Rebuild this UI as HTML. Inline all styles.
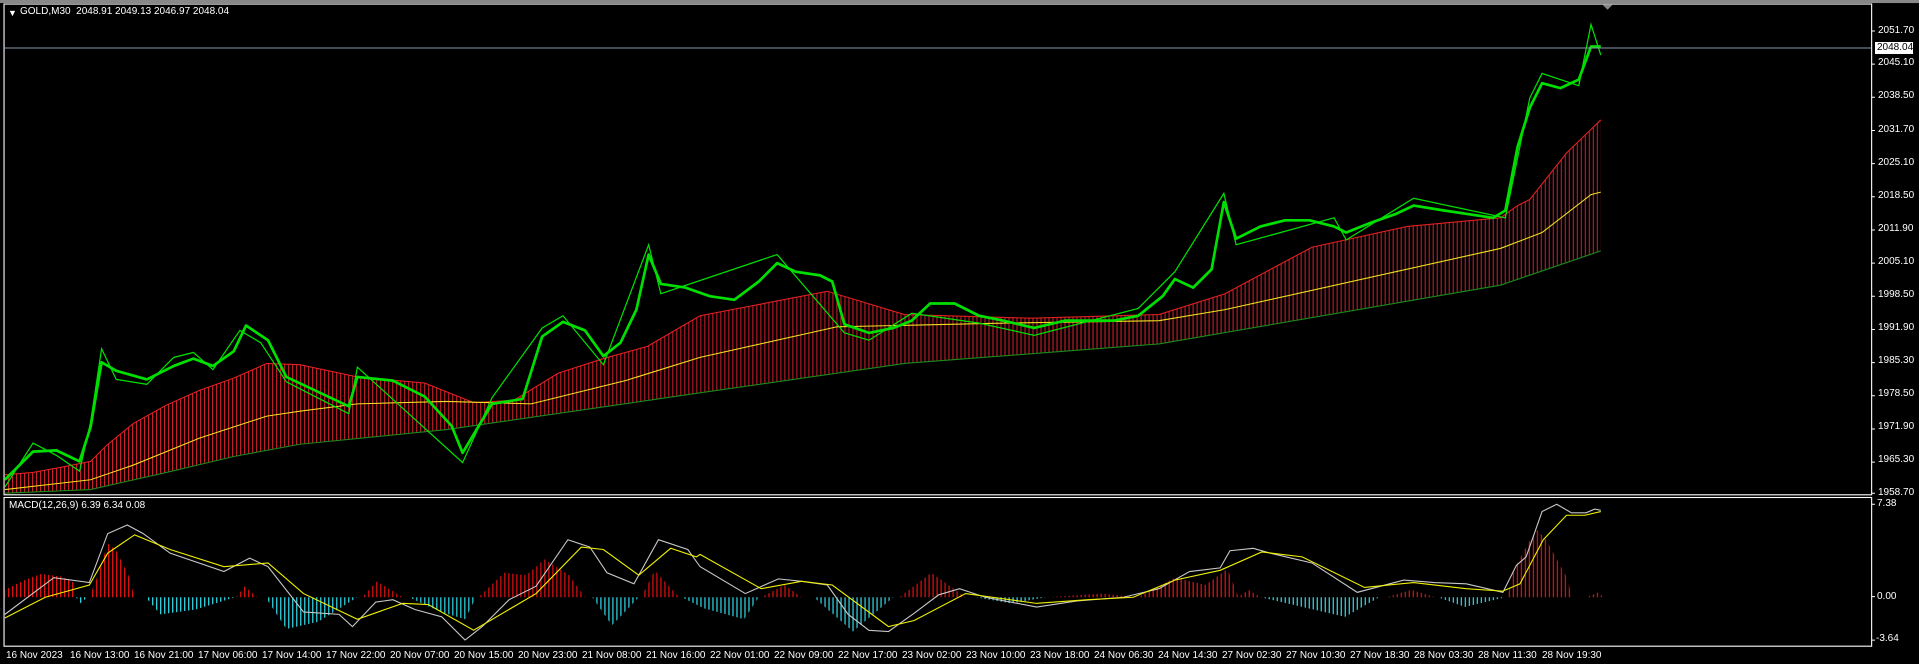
<!DOCTYPE html>
<html><head><meta charset="utf-8"><style>
html,body{margin:0;padding:0;background:#000;width:1919px;height:664px;overflow:hidden;position:relative;font-family:"Liberation Sans",sans-serif;font-size:10px;color:#fff}
.t{position:absolute;white-space:nowrap;line-height:12px}
svg{position:absolute;left:0;top:0}
</style></head><body>
<svg width="1919" height="664" viewBox="0 0 1568 542.55" preserveAspectRatio="none">
<defs>
<pattern id="hr" width="3.27" height="10" patternUnits="userSpaceOnUse"><rect x="0" y="0" width="0.8" height="10" fill="#d8202c"/></pattern>
<pattern id="hr2" width="3.27" height="10" patternUnits="userSpaceOnUse"><rect x="0" y="0" width="1" height="10" fill="#e01010"/></pattern>
<pattern id="hc" width="3.27" height="10" patternUnits="userSpaceOnUse"><rect x="0" y="0" width="1" height="10" fill="#30d8e8"/></pattern>
</defs>
<rect x="0" y="0" width="1568" height="2.5" fill="#888"/>
<rect x="3.3" y="3.3" width="1526" height="401" fill="none" stroke="#fff" stroke-width="0.9"/>
<rect x="3.3" y="406.5" width="1526" height="121.5" fill="none" stroke="#fff" stroke-width="0.9"/>
<polygon points="1309,3.5 1318,3.5 1313.5,8" fill="#888"/>
<polygon fill="url(#hr)" points="4,388 27,386 54,381 74,377 87,364 109,346 136,331 163,319 191,309 218,297 245,298 292,308 347,313 387,329 420,327 456,305 493,293 529,283 572,258 676,238 739,257 843,260 947,257 1001,240 1072,202 1150,185 1226,178 1240,168 1250,163 1280,125 1308,98 1308,205 1226,233 947,281 739,297 572,321 365,351 245,363 191,373 136,386 74,400 4,403"/>
<polyline fill="none" stroke="#e02020" stroke-width="0.9" points="4,388 27,386 54,381 74,377 87,364 109,346 136,331 163,319 191,309 218,297 245,298 292,308 347,313 387,329 420,327 456,305 493,293 529,283 572,258 676,238 739,257 843,260 947,257 1001,240 1072,202 1150,185 1226,178 1240,168 1250,163 1280,125 1308,98"/>
<polyline fill="none" stroke="#1a8a1a" stroke-width="0.9" points="4,403 74,400 136,386 191,373 245,363 365,351 572,321 739,297 947,281 1226,233 1308,205"/>
<polyline fill="none" stroke="#f0e020" stroke-width="0.9" points="4,400 74,392 109,380 163,358 218,340 245,336 292,330 365,328 434,330 511,311 572,292 684,267 822,264 947,262 1001,253 1226,203 1260,190 1300,159 1308,157"/>
<polyline fill="none" stroke="#00e000" stroke-width="2.2" stroke-linejoin="round" points="4,392 27,369 46,368 65,377 74,349 83,296 95,303 120,310 142,299 158,293 174,299 191,287 201,266 219,278 234,308 285,332 292,308 321,311 347,324 369,348 378,370 402,330 427,326 443,275 460,263 478,270 493,291 507,280 520,253 530,208 540,232 560,235 580,242 600,245 620,230 635,215 650,222 670,225 680,230 690,265 710,272 730,268 745,262 760,248 780,248 800,258 820,262 845,268 870,262 890,262 910,262 930,258 950,242 960,228 975,235 990,220 1000,165 1010,195 1030,185 1050,180 1070,180 1090,185 1100,190 1120,182 1140,175 1155,168 1180,172 1200,175 1220,178 1230,172 1240,120 1250,88 1260,68 1275,72 1290,65 1300,38 1308,38"/>
<polyline fill="none" stroke="#00e000" stroke-width="1" points="4,398 27,362 46,372 65,385 74,345 83,285 95,310 120,314 142,292 158,288 174,302 196,270 213,280 234,312 285,338 292,300 378,378 402,325 443,268 460,258 493,298 530,200 540,240 635,208 690,272 710,278 745,256 800,264 845,274 930,252 960,222 1000,158 1010,200 1090,178 1100,196 1155,162 1230,178 1250,80 1260,60 1290,70 1300,20 1308,45"/>
<line x1="3.3" y1="39.2" x2="1529" y2="39.2" stroke="#8a98a8" stroke-width="0.8"/>
<g>
<polygon fill="url(#hr2)" points="4,488 4,482 20,474 33,469 50,471 60,476 61,488"/>
<polygon fill="url(#hc)" points="62,488 66,493 71,488"/>
<polygon fill="url(#hr2)" points="73,488 80,470 88,444 95,450 105,470 110,488"/>
<polygon fill="url(#hc)" points="119,488 131,502 160,498 192,488"/>
<polygon fill="url(#hr2)" points="193,488 200,479 210,488"/>
<polygon fill="url(#hc)" points="217,488 234,514 260,508 292,488"/>
<polygon fill="url(#hr2)" points="296,488 308,475 329,488"/>
<polygon fill="url(#hc)" points="334,488 360,500 380,506 389,488"/>
<polygon fill="url(#hr2)" points="391,488 412,468 430,470 445,457 465,470 478,488"/>
<polygon fill="url(#hc)" points="484,488 500,511 522,488"/>
<polygon fill="url(#hr2)" points="524,488 535,466 555,488"/>
<polygon fill="url(#hc)" points="557,488 575,497 608,506 620,488"/>
<polygon fill="url(#hr2)" points="622,488 641,478 655,488"/>
<polygon fill="url(#hc)" points="665,488 697,516 730,488"/>
<polygon fill="url(#hr2)" points="735,488 761,468 789,488"/>
<polygon fill="url(#hc)" points="797,488 826,493 855,488"/>
<polygon fill="url(#hr2)" points="856,488 900,485 930,488"/>
<polygon fill="url(#hr2)" points="930,488 960,472 985,478 1003,465 1012,488"/>
<polygon fill="url(#hr2)" points="1012,488 1020,482 1030,488"/>
<polygon fill="url(#hc)" points="1030,488 1099,504 1127,488"/>
<polygon fill="url(#hr2)" points="1133,488 1153,482 1173,488"/>
<polygon fill="url(#hc)" points="1175,488 1197,496 1230,488"/>
<polygon fill="url(#hr2)" points="1232,488 1236,467 1252,438 1256,433 1264,442 1272,457 1281,473 1284,488"/>
<polygon fill="url(#hr2)" points="1296,488 1306,484 1310,488"/>
</g>
<polyline fill="none" stroke="#c8c8c8" stroke-width="0.9" points="4,502 44,472 73,476 88,436 104,429 117,436 139,452 183,467 204,456 219,463 248,500 277,502 288,512 307,492 321,490 339,498 361,504 380,523 394,512 416,490 438,479 464,441 482,447 496,468 518,477 538,441 562,449 572,463 609,485 636,473 655,475 676,478 693,502 710,515 726,516 747,501 767,486 784,481 805,488 847,496 880,491 918,488 947,481 972,467 997,464 1005,450 1024,448 1038,452 1072,460 1109,484 1147,474 1172,476 1198,477 1228,484 1239,462 1247,455 1260,418 1272,412 1284,419 1296,419 1303,416 1308,417"/>
<polyline fill="none" stroke="#f0f000" stroke-width="0.9" points="4,505 37,488 73,478 88,452 110,437 139,449 183,463 219,460 248,485 292,506 329,493 350,494 387,515 438,485 475,447 493,449 522,470 548,448 569,455 572,453 622,481 655,475 680,478 726,512 747,507 789,485 847,493 889,490 926,488 960,474 997,466 1031,451 1064,455 1115,480 1155,476 1198,481 1228,483 1242,477 1261,441 1280,421 1295,421 1308,418"/>
<g stroke="#fff" stroke-width="0.8">
<path d="M1529,25.3h3M1529,52.4h3M1529,79.5h3M1529,106.6h3M1529,133.7h3M1529,160.8h3M1529,187.9h3M1529,215h3M1529,242.1h3M1529,269.2h3M1529,296.3h3M1529,323.4h3M1529,350.5h3M1529,377.6h3M1529,403h3M1529,412h3M1529,487.5h3M1529,523h3"/>
</g>
</svg>
<div class="t" style="left:8px;top:7px;font-size:9px">▼</div>
<div class="t" style="left:20px;top:6px">GOLD,M30&nbsp; 2048.91 2049.13 2046.97 2048.04</div>
<div class="t" style="left:9px;top:500px">MACD(12,26,9) 6.39 6.34 0.08</div>
<div style="position:absolute;left:1875px;top:42px;width:38px;height:12px;background:#fff"></div>
<div class="t" style="left:1877px;top:42px;color:#000">2048.04</div>
<div class="t" style="left:1878px;top:25px">2051.70</div>
<div class="t" style="left:1878px;top:57px">2045.10</div>
<div class="t" style="left:1878px;top:90px">2038.50</div>
<div class="t" style="left:1878px;top:124px">2031.70</div>
<div class="t" style="left:1878px;top:157px">2025.10</div>
<div class="t" style="left:1878px;top:190px">2018.50</div>
<div class="t" style="left:1878px;top:223px">2011.90</div>
<div class="t" style="left:1878px;top:256px">2005.10</div>
<div class="t" style="left:1878px;top:289px">1998.50</div>
<div class="t" style="left:1878px;top:322px">1991.90</div>
<div class="t" style="left:1878px;top:355px">1985.30</div>
<div class="t" style="left:1878px;top:388px">1978.50</div>
<div class="t" style="left:1878px;top:421px">1971.90</div>
<div class="t" style="left:1878px;top:454px">1965.30</div>
<div class="t" style="left:1878px;top:487px">1958.70</div>
<div class="t" style="left:1877px;top:498px">7.38</div>
<div class="t" style="left:1877px;top:591px">0.00</div>
<div class="t" style="left:1876px;top:633px">-3.64</div>
<div style="position:absolute;left:0;top:650px;width:1919px;height:14px">
<div class="t" style="left:6px;top:0">16 Nov 2023</div>
<div class="t" style="left:70px;top:0">16 Nov 13:00</div>
<div class="t" style="left:134px;top:0">16 Nov 21:00</div>
<div class="t" style="left:198px;top:0">17 Nov 06:00</div>
<div class="t" style="left:262px;top:0">17 Nov 14:00</div>
<div class="t" style="left:326px;top:0">17 Nov 22:00</div>
<div class="t" style="left:390px;top:0">20 Nov 07:00</div>
<div class="t" style="left:454px;top:0">20 Nov 15:00</div>
<div class="t" style="left:518px;top:0">20 Nov 23:00</div>
<div class="t" style="left:582px;top:0">21 Nov 08:00</div>
<div class="t" style="left:646px;top:0">21 Nov 16:00</div>
<div class="t" style="left:710px;top:0">22 Nov 01:00</div>
<div class="t" style="left:774px;top:0">22 Nov 09:00</div>
<div class="t" style="left:838px;top:0">22 Nov 17:00</div>
<div class="t" style="left:902px;top:0">23 Nov 02:00</div>
<div class="t" style="left:966px;top:0">23 Nov 10:00</div>
<div class="t" style="left:1030px;top:0">23 Nov 18:00</div>
<div class="t" style="left:1094px;top:0">24 Nov 06:30</div>
<div class="t" style="left:1158px;top:0">24 Nov 14:30</div>
<div class="t" style="left:1222px;top:0">27 Nov 02:30</div>
<div class="t" style="left:1286px;top:0">27 Nov 10:30</div>
<div class="t" style="left:1350px;top:0">27 Nov 18:30</div>
<div class="t" style="left:1414px;top:0">28 Nov 03:30</div>
<div class="t" style="left:1478px;top:0">28 Nov 11:30</div>
<div class="t" style="left:1542px;top:0">28 Nov 19:30</div>
</div>
</body></html>
